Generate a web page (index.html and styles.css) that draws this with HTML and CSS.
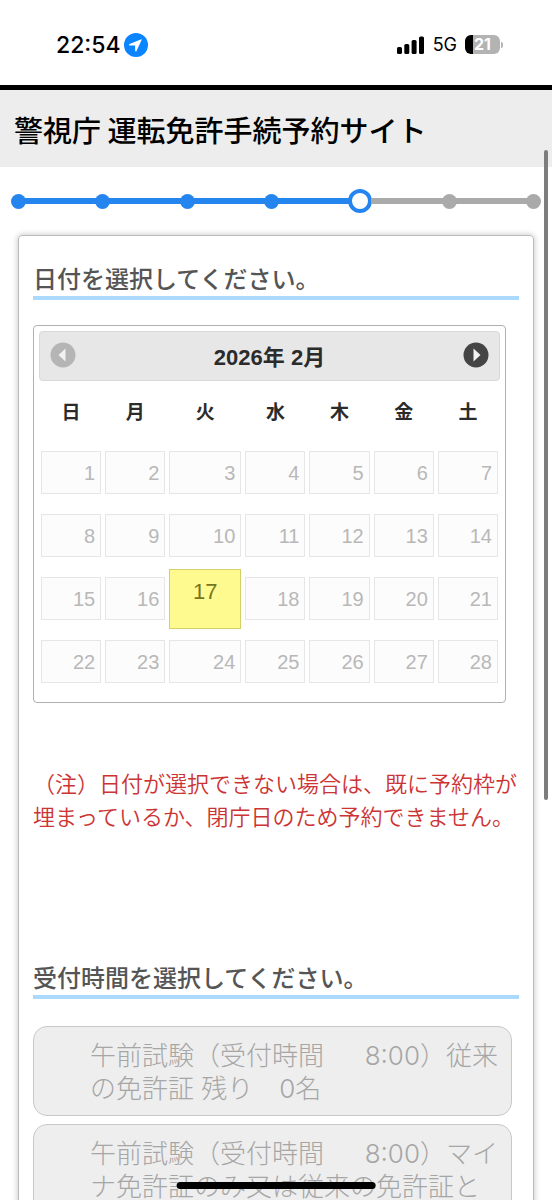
FILE: index.html
```html
<!DOCTYPE html>
<html lang="ja">
<head>
<meta charset="utf-8">
<meta name="viewport" content="width=device-width, initial-scale=1">
<title>警視庁 運転免許手続予約サイト</title>
<link rel="stylesheet" href="styles.css">
</head>
<body>
<div class="status">
  <div class="status-side">
    <span class="clock">22:54</span>
    <svg class="location" viewBox="0 0 24 24" aria-hidden="true"><circle cx="12" cy="12" r="12" fill="#0a84ff"/><path d="M17.3 6.2 5.6 11.1c-.9.4-.7 1.3.2 1.3l5.3.1.1 5.3c0 .9 1 1.1 1.3.2l5.2-11.3c.2-.4 0-.7-.4-.5z" fill="#fff"/></svg>
  </div>
  <div class="status-side status-right">
    <svg class="signal" viewBox="0 0 28 18" aria-hidden="true"><rect x="0" y="11" width="5" height="7" rx="1.6"/><rect x="7.3" y="8" width="5" height="10" rx="1.6"/><rect x="14.6" y="4" width="5" height="14" rx="1.6"/><rect x="22" y="0.5" width="5" height="17.5" rx="1.6"/></svg>
    <span class="network">5G</span>
    <span class="battery"><span class="battery-body">21</span><span class="battery-tip"></span></span>
  </div>
</div>
<header class="site-header"><h1>警視庁 運転免許手続予約サイト</h1></header>
<div class="steps" role="img" aria-label="7段階中5段階目">
  <span class="dot"></span><span class="line"></span><span class="dot"></span><span class="line"></span><span class="dot"></span><span class="line"></span><span class="dot"></span><span class="line"></span><span class="dot current"></span><span class="line todo"></span><span class="dot todo"></span><span class="line todo"></span><span class="dot todo"></span>
</div>
<main class="card">
  <h2>日付を選択してください。</h2>
  <section class="calendar">
    <div class="month">
      <button class="nav" type="button" aria-label="前の月" disabled><svg viewBox="0 0 26 26"><circle cx="13" cy="13" r="12.5" fill="#b5b5b5"/><path d="M15.5 6.5v13L8.5 13z" fill="#f2f2f2"/></svg></button>
      <span class="month-name">2026年 2月</span>
      <button class="nav" type="button" aria-label="次の月"><svg viewBox="0 0 26 26"><circle cx="13" cy="13" r="12.5" fill="#444"/><path d="M10.5 6.5v13l7-6.5z" fill="#f2f2f2"/></svg></button>
    </div>
    <table>
      <colgroup><col><col><col class="wide"><col><col><col><col></colgroup>
      <thead><tr><th>日</th><th>月</th><th>火</th><th>水</th><th>木</th><th>金</th><th>土</th></tr></thead>
      <tbody>
        <tr><td><span class="day">1</span></td><td><span class="day">2</span></td><td><span class="day">3</span></td><td><span class="day">4</span></td><td><span class="day">5</span></td><td><span class="day">6</span></td><td><span class="day">7</span></td></tr>
        <tr><td><span class="day">8</span></td><td><span class="day">9</span></td><td><span class="day">10</span></td><td><span class="day">11</span></td><td><span class="day">12</span></td><td><span class="day">13</span></td><td><span class="day">14</span></td></tr>
        <tr><td><span class="day">15</span></td><td><span class="day">16</span></td><td><a class="day open" href="#time">17</a></td><td><span class="day">18</span></td><td><span class="day">19</span></td><td><span class="day">20</span></td><td><span class="day">21</span></td></tr>
        <tr><td><span class="day">22</span></td><td><span class="day">23</span></td><td><span class="day">24</span></td><td><span class="day">25</span></td><td><span class="day">26</span></td><td><span class="day">27</span></td><td><span class="day">28</span></td></tr>
      </tbody>
    </table>
  </section>
  <p class="note">（注）日付が選択できない場合は、既に予約枠が埋まっているか、閉庁日のため予約できません。</p>
  <h2 id="time">受付時間を選択してください。</h2>
  <div class="slots">
    <label class="slot"><input type="radio" name="slot" disabled><span>午前試験（受付時間　&nbsp;&nbsp;8:00）従来の免許証 残り　0名</span></label>
    <label class="slot"><input type="radio" name="slot" disabled><span>午前試験（受付時間　&nbsp;&nbsp;8:00）マイナ免許証のみ又は従来の免許証と</span></label>
  </div>
</main>
<div class="scroll-thumb"></div>
<div class="home-bar"></div>
</body>
</html>
```
FILE: styles.css
```css
* { box-sizing: border-box; }
html { height: 100%; }
body {
  position: relative;
  height: 100%;
  margin: 0;
  overflow: hidden;
  background: #fff;
  color: #555;
  font-family: "Liberation Sans", "Noto Sans CJK JP", sans-serif;
}
.status {
  display: flex;
  align-items: center;
  justify-content: space-between;
  height: 85px;
  padding: 4px 49px 0 56px;
  color: #000;
  font-family: Inter, sans-serif;
}
.status-side { display: flex; align-items: center; gap: 3px; }
.status-right { gap: 8px; }
.clock { font-size: 23px; font-weight: 500; }
.location { width: 24px; height: 24px; }
.signal { width: 28px; height: 18px; }
.network { font-size: 18px; }
.battery { display: flex; align-items: center; gap: 1px; }
.battery-body {
  width: 35px;
  height: 19px;
  padding-left: 9px;
  border-radius: 6px;
  background: linear-gradient(to right, #000 8px, #b3b3b3 8px);
  color: #fff;
  font-size: 16px;
  font-weight: 700;
  line-height: 19px;
}
.battery-tip { width: 2px; height: 6px; border-radius: 0 2px 2px 0; background: #b3b3b3; }
.site-header {
  padding: 19px 14px 18px;
  border-top: 5px solid #000;
  background: #ededed;
  color: #000;
}
h1 {
  margin: 0;
  font-family: "Noto Sans CJK JP", sans-serif;
  font-size: 29px;
  font-weight: 500;
  line-height: 40px;
}
.steps { display: flex; align-items: center; height: 68px; padding: 0 11px; }
.dot { width: 15px; height: 15px; border-radius: 50%; background: #2585ee; }
.dot.current { width: 24px; height: 24px; border: 4px solid #2585ee; background: #fff; }
.line { flex: 1; height: 6px; margin: 0 -1px; background: #2585ee; }
.todo { background: #aaa; }
.card {
  margin: 0 18px;
  padding: 23px 14px 20px;
  border: 1px solid #bbb;
  border-radius: 4px;
  box-shadow: 0 0 6px rgba(0, 0, 0, 0.25);
}
h2 {
  margin: 0;
  border-bottom: 4px solid #acdaff;
  font-family: "Noto Sans CJK JP", sans-serif;
  font-size: 24px;
  font-weight: 500;
  line-height: 37px;
}
.calendar {
  margin: 25px 13px 0 0;
  padding: 5px 5px 9px;
  border: 1px solid #b0b0b0;
  border-radius: 4px;
}
.month {
  display: flex;
  align-items: center;
  justify-content: space-between;
  height: 50px;
  padding: 0 10px 3px;
  border: 1px solid #d8d8d8;
  border-radius: 4px;
  background: #e7e7e7;
  color: #2b2b2b;
}
.month-name { font-size: 22px; font-weight: 700; }
.nav { width: 26px; height: 26px; padding: 0; border: 0; background: none; }
.nav svg { display: block; }
table { width: 100%; border-collapse: collapse; table-layout: fixed; }
.wide { width: 76px; }
th { height: 60px; padding: 0 0 2px; color: #2b2b2b; font-size: 19px; }
td { height: 63px; padding: 0 2px; }
.day {
  display: block;
  height: 43px;
  padding-right: 5px;
  border: 1px solid #e6e6e6;
  background: #fcfcfc;
  color: #b8b8b8;
  font-size: 20px;
  line-height: 42px;
  text-align: right;
}
.day.open {
  height: 60px;
  padding: 0;
  border-color: #d3d068;
  background: #fffa90;
  color: #777620;
  font-size: 22px;
  line-height: 44px;
  text-align: center;
  text-decoration: none;
}
.note {
  margin: 63px 0 126px;
  color: #cc3434;
  font-family: "Noto Sans CJK JP", sans-serif;
  font-size: 22px;
  font-weight: 350;
  line-height: 33px;
}
.slots { display: grid; gap: 8px; margin: 27px 7px 0 0; }
.slot {
  display: flex;
  padding: 12px 11px 10px 56px;
  border: 1px solid #c8c8c8;
  border-radius: 14px;
  background: #eee;
  color: #a6a6a6;
  font-family: Inter, "Noto Sans CJK JP", sans-serif;
  font-size: 26px;
  font-weight: 300;
  line-height: 33px;
}
.slot input { appearance: none; width: 0; margin: 0; }
.scroll-thumb {
  position: absolute;
  top: 150px;
  right: 4px;
  width: 4px;
  height: 650px;
  border-radius: 2px;
  background: #7d7d7d;
}
.home-bar {
  position: absolute;
  bottom: 11px;
  left: 50%;
  width: 36%;
  height: 7px;
  border-radius: 4px;
  background: #000;
  transform: translateX(-50%);
}
```
